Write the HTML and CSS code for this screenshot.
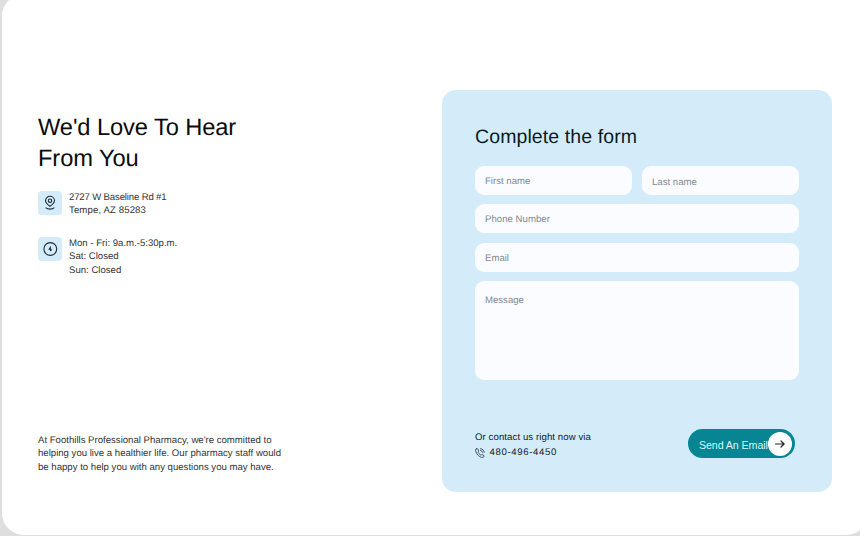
FILE: index.html
```
<!DOCTYPE html>
<html lang="en">
<head>
<meta charset="utf-8">
<title>Contact – Foothills Professional Pharmacy</title>
<link rel="stylesheet" href="styles.css">
</head>
<body>
<main class="page">
  <section class="intro">
    <h1 class="headline">We'd Love To Hear<br>From You</h1>
    <div class="info">
      <span class="tile">
        <svg width="24" height="24" viewBox="0 0 24 24"><path d="M12 15.400C9.400 13.300 7.500 11.700 7.500 9.700a4.500 4.500 0 0 1 9 0c0 2-1.900 3.600-4.500 5.700zM8 16.900c1.700 1.600 6.300 1.600 8 0"/><circle cx="12" cy="9.700" r="1.700"/></svg>
      </span>
      <p><span class="street">2727 W Baseline Rd #1</span><br><span class="city">Tempe, AZ 85283</span></p>
    </div>
    <div class="info hours">
      <span class="tile">
        <svg width="24" height="24" viewBox="0 0 24 24"><circle cx="12.300" cy="12" r="6.400"/><path class="solid" d="M12.600 8.800 10.300 12.700h1.700a.9.900 0 1 0 1.500 0l.4-.5-.9-.5z"/></svg>
      </span>
      <p>Mon - Fri: 9a.m.-5:30p.m.<br>Sat: Closed<br>Sun: Closed</p>
    </div>
    <p class="about">At Foothills Professional Pharmacy, we're committed to<br>helping you live a healthier life. Our pharmacy staff would<br>be happy to help you with any questions you may have.</p>
  </section>
  <form class="panel">
    <h2 class="title">Complete the form</h2>
    <div class="fields">
      <label class="field">First name</label>
      <label class="field last">Last name</label>
      <label class="field wide phone">Phone Number</label>
      <label class="field wide">Email</label>
      <label class="field wide message">Message</label>
    </div>
    <div class="actions">
      <div class="call">
        <p class="via">Or contact us right now via</p>
        <p class="number">
          <svg width="10" height="10" viewBox="0 0 10 10"><path d="M1.200.9C.3 1.700.4 3.300 1.500 5.200c1.500 2.600 4.700 4.800 6.500 4.100.8-.4 1.300-1.200 1-1.600L7.300 6.500c-.6-.3-1 .6-1.500.5C4.600 6.500 3.500 5.300 3.100 4.300c-.1-.5.8-.8.6-1.400L2.800 1.100C2.500.5 1.700.4 1.200.9zM5.500.7c2 .1 3.500 1.600 3.700 3.600M5.500 2.500c1.100.1 1.800.8 1.900 1.900"/></svg>
          <span class="digits">480-496-4450</span>
        </p>
      </div>
      <button class="send" type="button"><span class="s-text">Send An Email</span><span class="arrow"><svg width="24" height="24" viewBox="0 0 24 24"><path d="M7.500 12h8.500M13 9l3.100 3-3.100 3"/></svg></span></button>
    </div>
  </form>
</main>
</body>
</html>
```
FILE: styles.css
```
* { box-sizing: border-box; }
body {
  margin: 0;
  width: 860px;
  height: 536px;
  overflow: hidden;
  background: #dedede;
  font-family: "Liberation Sans", Arial, sans-serif;
  text-rendering: geometricPrecision;
  color: #333;
}
h1, h2, p { margin: 0; font-weight: 400; }
p, label, button { white-space: nowrap; }
svg { display: block; fill: none; stroke: #1c2b36; stroke-linecap: round; stroke-linejoin: round; }
.page {
  display: flex;
  justify-content: space-between;
  width: 866px;
  height: 541px;
  margin: -6px 0 0 2px;
  padding: 96px 36px 43px 36px;
  background: #fff;
  border-radius: 22px;
}
.intro { display: flex; flex-direction: column; width: 300px; padding-top: 23px; }
.headline { font-size: 23.700px; line-height: 31px; letter-spacing: -.1px; color: #0c0c0c; white-space: nowrap; }
.info { display: flex; gap: 7px; margin-top: 16px; font-size: 9.600px; line-height: 13.400px; }
.hours { margin-top: 19px; }
.tile { width: 24px; height: 24px; flex: none; background: #d4ecfa; border-radius: 4px; }
.tile svg { stroke-width: 1.100; }
.tile svg .solid { fill: #1c2b36; stroke: none; }
.street { letter-spacing: -.16px; }
.city { letter-spacing: .12px; }
.about { margin-top: auto; margin-bottom: 18px; font-size: 9.600px; line-height: 13.500px; }
.panel {
  display: flex;
  flex-direction: column;
  width: 390px;
  height: 401.500px;
  padding: 33px;
  background: #d4ecfa;
  border-radius: 14px;
}
.title { margin-top: 1px; font-size: 19.500px; line-height: 26px; letter-spacing: .1px; color: #0b1b22; white-space: nowrap; }
.fields { display: grid; grid-template-columns: 1fr 1fr; gap: 9.700px 10px; margin-top: 16px; width: 324px; }
.field {
  display: flex;
  align-items: center;
  height: 28.800px;
  padding: 2px 10px 0;
  background: #fafcff;
  border-radius: 9px;
  font-size: 9.600px;
  color: #85888d;
}
.last { padding-top: 4px; }
.wide { grid-column: span 2; }
.phone { letter-spacing: .03px; }
.message { height: 99px; align-items: flex-start; padding-top: 14px; }
.actions { display: flex; justify-content: space-between; margin-top: 49px; padding-right: 4px; }
.call { padding-top: .5px; font-size: 9.600px; line-height: 15.500px; color: #0f2029; }
.via { letter-spacing: .09px; }
.number { display: flex; align-items: center; gap: 4.500px; }
.number svg { stroke-width: .8; }
.digits { letter-spacing: .64px; }
.send {
  display: flex;
  align-items: center;
  justify-content: space-between;
  width: 107px;
  height: 29px;
  padding: 0 3px 0 11px;
  border: 0;
  border-radius: 15px;
  background: #078592;
  color: #d9f5f8;
  font: 400 10.700px "Liberation Sans", Arial, sans-serif;
  letter-spacing: -.1px;
}
.s-text { width: 69px; padding-top: 2px; text-align: left; }
.arrow { width: 24px; height: 24px; flex: none; border-radius: 50%; background: #fff; }
.arrow svg { stroke: #222; stroke-width: 1.200; }
```
